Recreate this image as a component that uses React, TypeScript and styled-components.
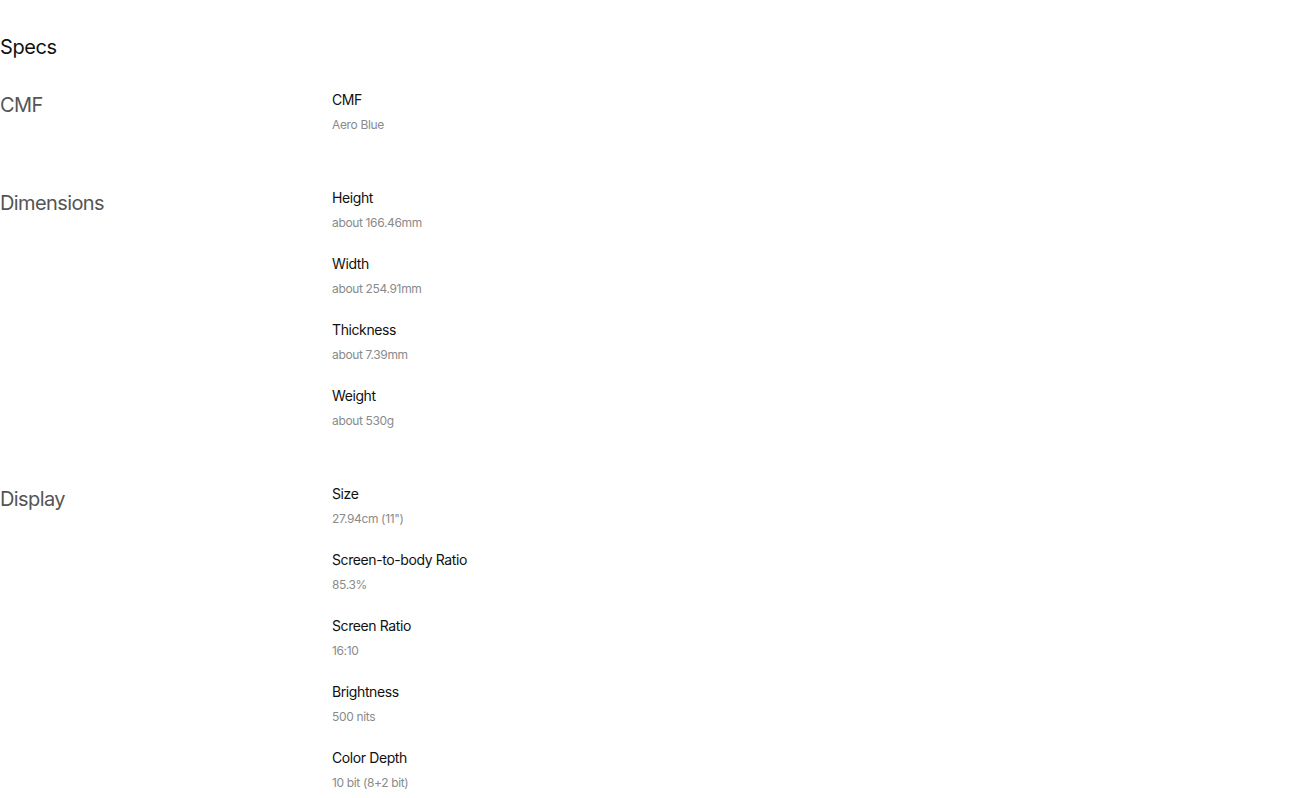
import styled, { createGlobalStyle } from 'styled-components';

const GlobalStyle = createGlobalStyle`
    body {
        margin: 0;
        background: #ffffff;
        font-family: Inter, "Liberation Sans", Arial, sans-serif;
    }
`;

type Item = { label: string; value: string };
type Section = { title: string; items: Item[] };

const sections: Section[] = [
    { title: 'CMF', items: [{ label: 'CMF', value: 'Aero Blue' }] },
    {
        title: 'Dimensions',
        items: [
            { label: 'Height', value: 'about 166.46mm' },
            { label: 'Width', value: 'about 254.91mm' },
            { label: 'Thickness', value: 'about 7.39mm' },
            { label: 'Weight', value: 'about 530g' },
        ],
    },
    {
        title: 'Display',
        items: [
            { label: 'Size', value: '27.94cm (11")' },
            { label: 'Screen-to-body Ratio', value: '85.3%' },
            { label: 'Screen Ratio', value: '16:10' },
            { label: 'Brightness', value: '500 nits' },
            { label: 'Color Depth', value: '10 bit (8+2 bit)' },
        ],
    },
];

export default function App() {
    return (
        <Page>
            <GlobalStyle />
            <Heading>Specs</Heading>
            <Sections>
                {sections.map((s) => (
                    <SectionRow key={s.title}>
                        <SectionTitle>{s.title}</SectionTitle>
                        <ItemList>
                            {s.items.map((it) => (
                                <SpecItem key={it.label}>
                                    <Label>{it.label}</Label>
                                    <Value>{it.value}</Value>
                                </SpecItem>
                            ))}
                        </ItemList>
                    </SectionRow>
                ))}
            </Sections>
        </Page>
    );
}

const Page = styled.div`
    padding-top: 33px;
    width: 100%;
`;

const Heading = styled.h2`
    margin: 0;
    font-size: 20px;
    line-height: 28px;
    font-weight: 400;
    color: #111111;
    letter-spacing: -0.4px;
`;

const Sections = styled.div`
    display: flex;
    flex-direction: column;
    gap: 53px;
    margin-top: 29px;
`;

const SectionRow = styled.div`
    display: grid;
    grid-template-columns: 332px 1fr;
`;

const SectionTitle = styled.h3`
    margin: 0;
    padding-top: 1px;
    font-size: 20px;
    line-height: 28px;
    font-weight: 400;
    color: #555555;
    letter-spacing: -0.6px;
`;

const ItemList = styled.div`
    display: flex;
    flex-direction: column;
    gap: 21px;
`;

const SpecItem = styled.div`
    display: flex;
    flex-direction: column;
    gap: 5px;
`;

const Label = styled.div`
    font-size: 14px;
    line-height: 20px;
    color: #111111;
    letter-spacing: -0.4px;
`;

const Value = styled.div`
    font-size: 12px;
    line-height: 20px;
    color: #8a8a8a;
    letter-spacing: -0.35px;
`;
